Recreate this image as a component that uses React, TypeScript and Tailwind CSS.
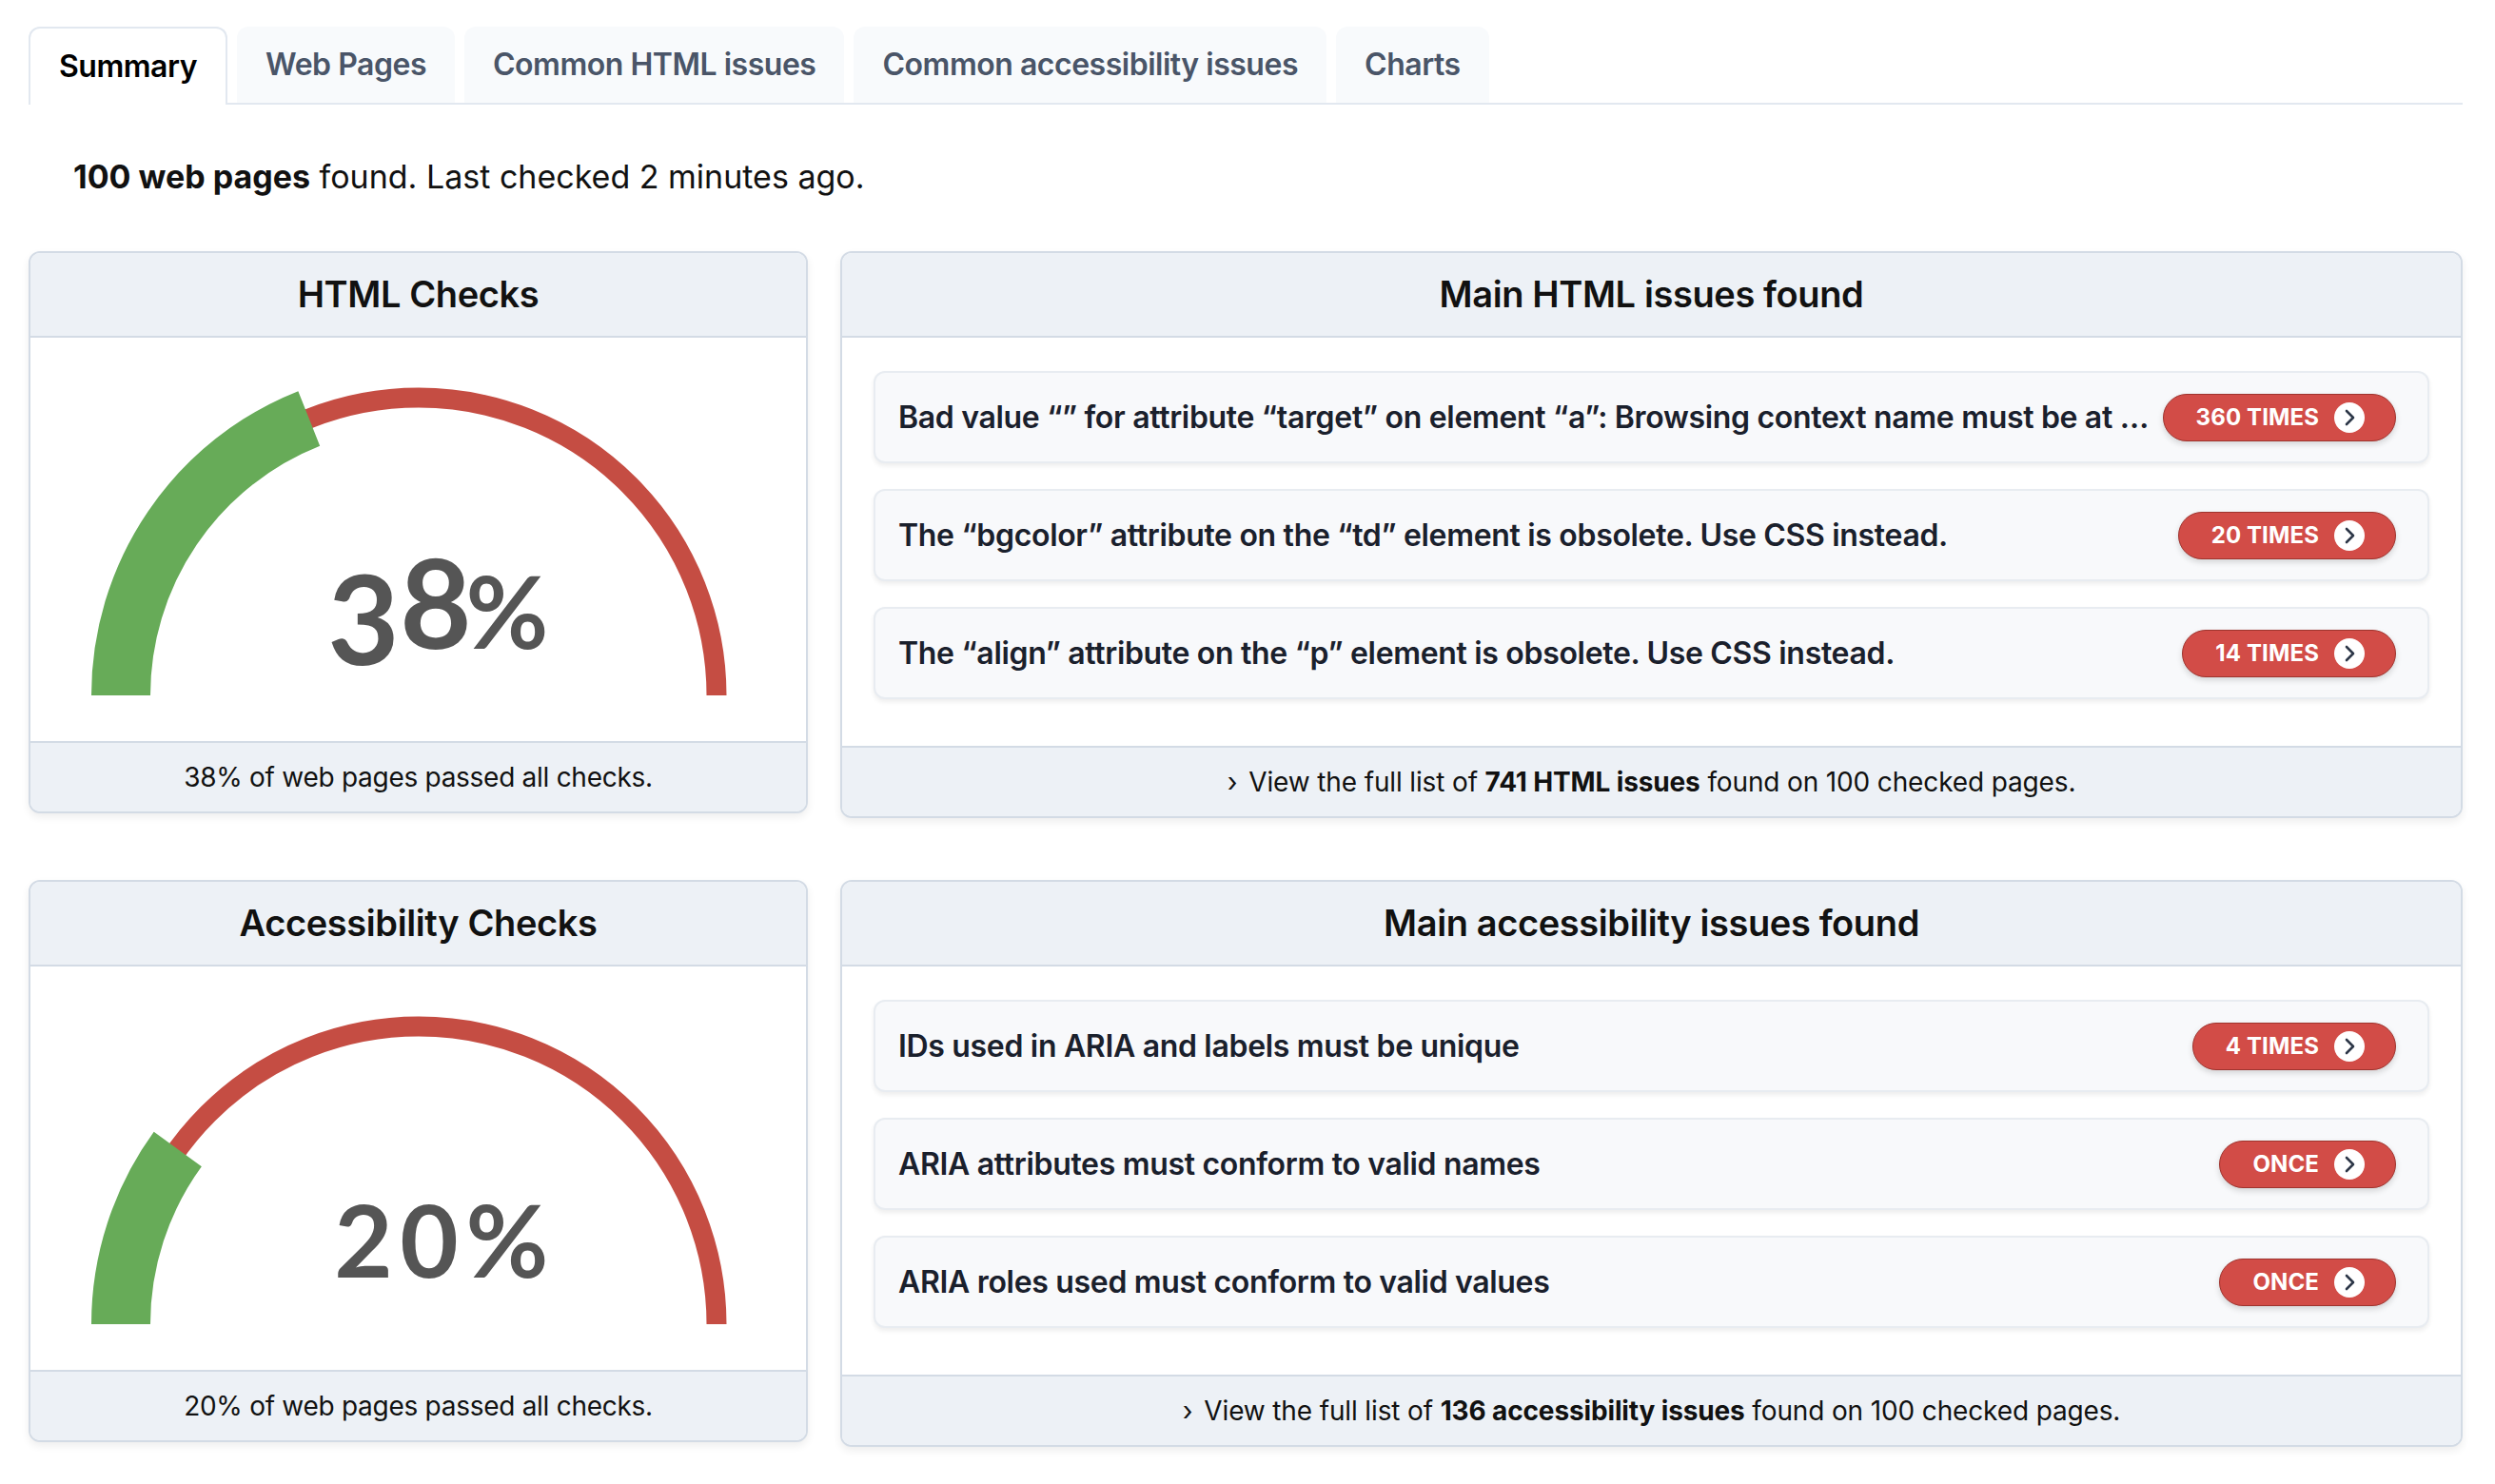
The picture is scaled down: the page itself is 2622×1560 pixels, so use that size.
import React from "react";

type Issue = { text: string; badge: string };

const htmlIssues: Issue[] = [
  {
    text: "Bad value “” for attribute “target” on element “a”: Browsing context name must be at least one character long.",
    badge: "360 TIMES",
  },
  { text: "The “bgcolor” attribute on the “td” element is obsolete. Use CSS instead.", badge: "20 TIMES" },
  { text: "The “align” attribute on the “p” element is obsolete. Use CSS instead.", badge: "14 TIMES" },
];

const a11yIssues: Issue[] = [
  { text: "IDs used in ARIA and labels must be unique", badge: "4 TIMES" },
  { text: "ARIA attributes must conform to valid names", badge: "ONCE" },
  { text: "ARIA roles used must conform to valid values", badge: "ONCE" },
];

const tabs = ["Summary", "Web Pages", "Common HTML issues", "Common accessibility issues", "Charts"];

// old-style figure emulation: small (x-height) figures, tall figures, descending figures
function figure(ch: string) {
  if ("012%".includes(ch)) return { size: 106, dy: 0, w: 69 };
  if ("68".includes(ch)) return { size: 130, dy: 0, w: 76 };
  return { size: 130, dy: 17, w: 76 };
}

function Gauge({ pct }: { pct: number }) {
  const cx = 408;
  const cy = 376;
  const r = 313;
  const a = Math.PI * (1 - pct / 100);
  const ex = cx + r * Math.cos(a);
  const ey = cy - r * Math.sin(a);
  const digits = String(pct).split("");
  const glyphs: { ch: string; x: number; size: number; dy: number }[] = [];
  let x = 350;
  digits.forEach((d, i) => {
    const f = figure(d);
    if (i > 0) {
      const prev = figure(digits[i - 1]);
      x += (prev.w + f.w) / 2;
    }
    glyphs.push({ ch: d, x, size: f.size, dy: f.dy });
  });
  glyphs.push({ ch: "%", x: 501, size: 106, dy: 0 });
  return (
    <svg width="815" height="424" viewBox="0 0 815 424" className="block">
      <path d={`M ${cx - r} ${cy} A ${r} ${r} 0 0 1 ${cx + r} ${cy}`} fill="none" stroke="#c54d43" strokeWidth="21" />
      <path d={`M ${cx - r} ${cy} A ${r} ${r} 0 0 1 ${ex} ${ey}`} fill="none" stroke="#67ab58" strokeWidth="62" />
      <text fill="#555555" fontWeight="700" textAnchor="middle" className="font-['Lato']">
        {glyphs.map((g, i) => (
          <tspan key={i} x={g.x} y={327 + g.dy} fontSize={g.size}>
            {g.ch}
          </tspan>
        ))}
      </text>
    </svg>
  );
}

function Badge({ label }: { label: string }) {
  return (
    <span className="flex h-[50px] shrink-0 items-center rounded-full border-[1.5px] border-[#9e342e] bg-[#d24c47] pl-[34px] pr-[32px] shadow-[0_3px_6px_rgba(0,0,0,0.15)]">
      <span className="text-[24px] font-bold leading-none tracking-[0.005em] text-white">{label}</span>
      <span className="ml-[16px] flex h-[32px] w-[32px] items-center justify-center rounded-full bg-white">
        <svg width="18" height="20" viewBox="0 0 18 20">
          <path d="M6 3 L13 10 L6 17" fill="none" stroke="#2d3748" strokeWidth="2.6" strokeLinecap="round" strokeLinejoin="round" />
        </svg>
      </span>
    </span>
  );
}

function CardHeader({ title }: { title: string }) {
  return (
    <div className="flex h-[89px] items-center justify-center border-b-2 border-[#d3dbe5] bg-[#edf1f6]">
      <h2 className="text-[38px] font-semibold tracking-[-0.01em] text-[#111111]">{title}</h2>
    </div>
  );
}

function GaugeCard({ title, pct }: { title: string; pct: number }) {
  return (
    <div className="overflow-hidden rounded-[12px] border-2 border-[#d3dbe5] bg-white shadow-[0_4px_8px_rgba(0,0,0,0.07)]">
      <CardHeader title={title} />
      <div className="h-[424px]">
        <Gauge pct={pct} />
      </div>
      <div className="flex h-[74px] items-center justify-center border-t-2 border-[#d3dbe5] bg-[#edf1f6] text-[28px] tracking-[-0.01em] text-[#111111]">
        {pct}% of web pages passed all checks.
      </div>
    </div>
  );
}

function IssuesCard({ title, issues, count, kind }: { title: string; issues: Issue[]; count: number; kind: string }) {
  return (
    <div className="overflow-hidden rounded-[12px] border-2 border-[#d3dbe5] bg-white shadow-[0_4px_8px_rgba(0,0,0,0.07)]">
      <CardHeader title={title} />
      <div className="flex flex-col gap-[27px] px-[33px] pb-[49px] pt-[35px]">
        {issues.map((it) => (
          <div
            key={it.text}
            className="flex h-[97px] items-center gap-[10px] rounded-[12px] border-2 border-[#e8ecf1] bg-[#f8f9fb] pl-[24px] pr-[33px] shadow-[0_3px_5px_rgba(0,0,0,0.07)]"
          >
            <span className="min-w-0 flex-1 truncate text-[32px] font-semibold tracking-[-0.01em] text-[#1a202c]">{it.text}</span>
            <Badge label={it.badge} />
          </div>
        ))}
      </div>
      <div className="flex h-[74px] items-center justify-center border-t-2 border-[#d3dbe5] bg-[#edf1f6] text-[28px] tracking-[-0.005em] text-[#111111]">
        <span className="mr-[12px] text-[28px]">›</span>
        <span>
          View the full list of <b className="font-bold">{count} {kind}</b> found on 100 checked pages.
        </span>
      </div>
    </div>
  );
}

export default function App() {
  return (
    <div className="min-h-screen bg-white pl-[30px] pr-[34px] pt-[28px] font-['Inter',sans-serif]">
      <div className="flex gap-[10px] border-b-2 border-[#e2e8f0]">
        {tabs.map((t, i) =>
          i === 0 ? (
            <div
              key={t}
              className="-mb-[2px] flex h-[82px] items-center rounded-t-[12px] border-2 border-b-0 border-[#e2e8f0] bg-white px-[30px] text-[32px] font-semibold tracking-[-0.015em] text-black"
            >
              {t}
            </div>
          ) : (
            <div
              key={t}
              className="flex h-[80px] items-center rounded-t-[12px] bg-[#f8fafc] px-[30px] text-[32px] font-semibold tracking-[-0.015em] text-[#4a5568]"
            >
              {t}
            </div>
          )
        )}
      </div>

      <p className="mb-[53px] mt-[50px] pl-[47px] text-[34px] leading-[51px] text-[#111111]">
        <b className="font-bold">100 web pages</b> found. Last checked 2 minutes ago.
      </p>

      <div className="grid grid-cols-[819px_1fr] items-start gap-x-[34px] gap-y-[65px]">
        <GaugeCard title="HTML Checks" pct={38} />
        <IssuesCard title="Main HTML issues found" issues={htmlIssues} count={741} kind="HTML issues" />
        <GaugeCard title="Accessibility Checks" pct={20} />
        <IssuesCard title="Main accessibility issues found" issues={a11yIssues} count={136} kind="accessibility issues" />
      </div>
    </div>
  );
}
